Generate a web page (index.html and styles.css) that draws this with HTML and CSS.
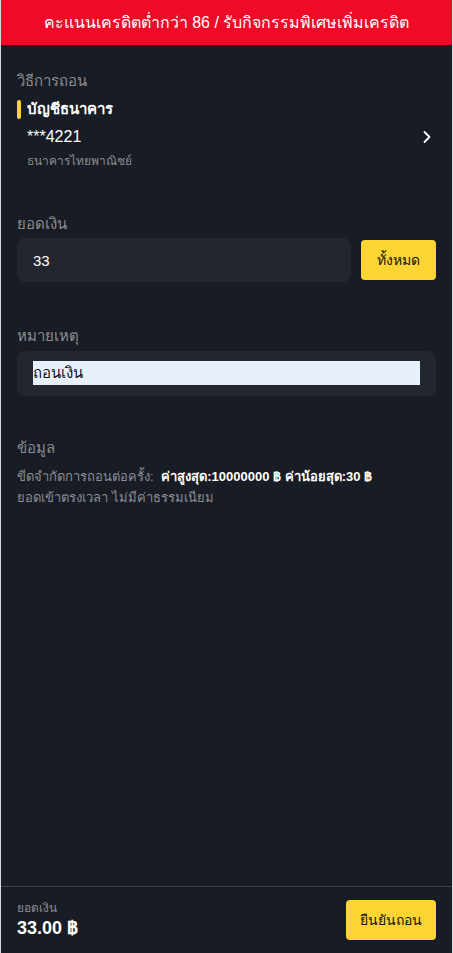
FILE: index.html
```html
<!DOCTYPE html>
<html lang="th">
<head>
<meta charset="utf-8">
<title>ถอนเงิน</title>
<link rel="stylesheet" href="styles.css">
</head>
<body>
<div class="page">
  <div class="banner">คะแนนเครดิตต่ำกว่า 86 / รับกิจกรรมพิเศษเพิ่มเครดิต</div>
  <main class="content">
    <section class="section method">
      <div class="label">วิธีการถอน</div>
      <div class="method-title"><span class="mark"></span>บัญชีธนาคาร</div>
      <div class="account">
        <div class="account-info">
          <div class="acc-no">***4221</div>
          <div class="bank">ธนาคารไทยพาณิชย์</div>
        </div>
        <svg class="chev" width="10" height="14" viewBox="0 0 10 14"><path d="M2.5 2 L7.5 7 L2.5 12" fill="none" stroke="#fff" stroke-width="1.8" stroke-linecap="round" stroke-linejoin="round"/></svg>
      </div>
    </section>
    <section class="section amount">
      <div class="label">ยอดเงิน</div>
      <div class="amount-row">
        <div class="field">33</div>
        <button class="btn all">ทั้งหมด</button>
      </div>
    </section>
    <section class="section remark">
      <div class="label">หมายเหตุ</div>
      <div class="remark-box">
        <div class="remark-input">ถอนเงิน</div>
      </div>
    </section>
    <section class="section info">
      <div class="label">ข้อมูล</div>
      <div class="info-line">ขีดจำกัดการถอนต่อครั้ง: <b>ค่าสูงสุด:10000000 ฿ ค่าน้อยสุด:30 ฿</b></div>
      <div class="info-line">ยอดเข้าตรงเวลา ไม่มีค่าธรรมเนียม</div>
    </section>
  </main>
  <footer class="footer">
    <div class="total">
      <div class="total-label">ยอดเงิน</div>
      <div class="total-value">33.00 ฿</div>
    </div>
    <button class="btn confirm">ยืนยันถอน</button>
  </footer>
</div>
</body>
</html>
```
FILE: styles.css
```css
* { box-sizing: border-box; }
html, body { margin: 0; padding: 0; }
body {
  background: #181c24;
  font-family: "Liberation Sans", Arial, sans-serif;
  color: #fff;
}
.page {
  min-height: 953px;
  display: flex;
  flex-direction: column;
  border-left: 1px solid #d7d9dd;
  border-right: 1px solid #d7d9dd;
  background: #181c24;
}
.banner {
  height: 45px;
  background: #ef0b27;
  color: #fff;
  font-size: 16px;
  display: flex;
  align-items: center;
  justify-content: center;
}
.content {
  flex: 1;
  padding: 0 16px;
}
.section { padding-top: 26px; }
.label {
  color: #8a8d93;
  font-size: 15px;
  line-height: 20px;
}
.method { padding-top: 26px; }
.method-title {
  display: flex;
  align-items: center;
  margin-top: 8px;
  font-size: 15px;
  font-weight: bold;
  line-height: 20px;
}
.mark {
  width: 4px;
  height: 19px;
  border-radius: 2px;
  background: #fcd535;
  margin-right: 6px;
}
.account {
  display: flex;
  align-items: center;
  justify-content: space-between;
  padding-left: 10px;
  padding-right: 4px;
}
.acc-no {
  font-size: 16px;
  line-height: 20px;
  margin-top: 8px;
}
.bank {
  font-size: 12px;
  color: #8a8d93;
  margin-top: 6px;
  line-height: 16px;
}
.chev { margin-bottom: 14px; }
.amount { padding-top: 45px; }
.amount-row {
  display: flex;
  align-items: center;
  gap: 10px;
  margin-top: 4px;
}
.field {
  flex: 1;
  height: 44px;
  background: #22272f;
  border-radius: 8px;
  padding-left: 16px;
  display: flex;
  align-items: center;
  font-size: 15px;
}
.btn {
  border: none;
  background: #fcd535;
  color: #111;
  font-family: inherit;
  font-size: 14px;
  border-radius: 4px;
  cursor: pointer;
}
.all {
  width: 75px;
  height: 40px;
}
.remark { padding-top: 44px; }
.remark-box {
  margin-top: 5px;
  background: #22272f;
  border-radius: 8px;
  height: 45px;
  padding: 10px 16px;
}
.remark-input {
  height: 24px;
  background: #e8f0fe;
  color: #111;
  font-size: 15px;
  display: flex;
  align-items: center;
}
.info { padding-top: 42px; }
.info-line {
  color: #8a8d93;
  font-size: 13px;
  line-height: 21px;
}
.info .label { margin-bottom: 8px; }
.info-line b { color: #fff; margin-left: 4px; }
.footer {
  height: 67px;
  border-top: 1px solid #3a3f48;
  display: flex;
  align-items: center;
  justify-content: space-between;
  padding: 0 16px;
}
.total-label {
  font-size: 12px;
  color: #8a8d93;
  line-height: 16px;
}
.total-value {
  font-size: 18px;
  font-weight: bold;
  line-height: 24px;
}
.confirm {
  width: 90px;
  height: 40px;
}
```
